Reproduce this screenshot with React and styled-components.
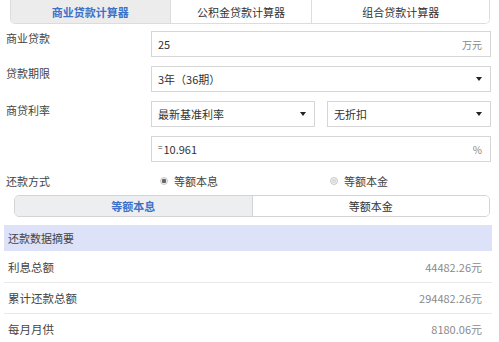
import React from 'react';
import styled, { createGlobalStyle } from 'styled-components';

const GlobalStyle = createGlobalStyle`
    body {
        margin: 0;
        background: #fff;
        font-family: 'Noto Sans CJK SC', 'Liberation Sans', sans-serif;
        color: #444;
    }
`

const Page = styled.div`
    width: 499px;
    height: 342px;
    overflow: hidden;
    font-size: 11px;
`

const Tabs = styled.div`
    display: flex;
    margin: 0 9px 0 10px;
    height: 24px;
    border: 1px solid #dcdcdc;
    border-top: none;
    border-radius: 0 0 5px 5px;
    box-sizing: border-box;
    overflow: hidden;
`

const Tab = styled.div`
    width: ${props => props.w}px;
    display: flex;
    align-items: center;
    justify-content: center;
    background: ${props => (props.active ? '#ececec' : '#fff')};
    color: ${props => (props.active ? '#3b71c9' : '#333')};
    font-weight: ${props => (props.active ? 'bold' : 'normal')};
    border-left: ${props => (props.first ? 'none' : '1px solid #dcdcdc')};
    font-size: 11px;
`

const Form = styled.div`
    display: flex;
    flex-direction: column;
    gap: 9px;
    padding: 7px 8px 0 6px;
`

const Row = styled.div`
    display: flex;
    align-items: flex-start;
`

const Label = styled.div`
    width: 145px;
    font-size: 11px;
    color: #444;
    line-height: 14px;
    padding-top: ${props => props.pt || 0}px;
    padding-left: ${props => props.pl || 0}px;
`

const Controls = styled.div`
    flex: 1;
    display: flex;
    gap: 12px;
`

const Box = styled.div`
    flex: 1;
    height: 26px;
    box-sizing: border-box;
    border: 1px solid #d6d6d6;
    display: flex;
    align-items: center;
    justify-content: space-between;
    padding: 0 8px 0 6px;
    font-size: 11px;
    color: #333;
`

const Unit = styled.span`
    color: #888;
    font-size: 10px;
`

const Arrow = styled.span`
    width: 0;
    height: 0;
    border-left: 3.5px solid transparent;
    border-right: 3.5px solid transparent;
    border-top: 4px solid #222;
`

const Eq = styled.span`
    font-size: 8px;
    margin-right: 1px;
    position: relative;
    top: -4px;
`

const RadioRow = styled.div`
    display: flex;
    align-items: center;
    margin-top: 11px;
`

const RadioOpt = styled.div`
    display: flex;
    align-items: center;
    gap: 6px;
    width: ${props => props.w}px;
    padding-left: ${props => props.pl || 0}px;
    color: #444;
`

const Dot = styled.span`
    width: 8px;
    height: 8px;
    border-radius: 50%;
    border: 1px solid #c8c8c8;
    background: ${props => (props.on ? 'radial-gradient(circle, #666 0 2px, #eee 2.5px)' : 'radial-gradient(circle, #ddd 0 2px, #f2f2f2 2.5px)')};
    box-sizing: border-box;
`

const Switch = styled.div`
    display: flex;
    margin: 6px 9px 0 14px;
    height: 22px;
    border: 1px solid #d4d4d4;
    border-radius: 5px;
    overflow: hidden;
    box-sizing: border-box;
`

const SwitchPart = styled.div`
    flex: 1;
    display: flex;
    align-items: center;
    justify-content: center;
    background: ${props => (props.active ? '#eceeef' : '#fff')};
    color: ${props => (props.active ? '#3b71c9' : '#333')};
    font-weight: ${props => (props.active ? 'bold' : 'normal')};
    border-left: ${props => (props.active ? 'none' : '1px solid #d4d4d4')};
`

const Summary = styled.div`
    margin: 8px 7px 0 4px;
`

const SummaryHead = styled.div`
    height: 26px;
    background: #dde2f8;
    display: flex;
    align-items: center;
    padding-left: 4px;
    color: #444;
`

const SummaryRow = styled.div`
    height: 31px;
    display: flex;
    align-items: center;
    justify-content: space-between;
    padding: 0 10px 0 4px;
    border-top: ${props => (props.first ? 'none' : '1px solid #e8e8e8')};
    box-sizing: border-box;
    font-size: 11.5px;
`

const Value = styled.span`
    color: #8a8a8a;
    font-size: 11px;
`

const App = () => {
    const results = [
        ['利息总额', '44482.26元'],
        ['累计还款总额', '294482.26元'],
        ['每月月供', '8180.06元'],
    ];

    return (
        <Page>
            <GlobalStyle />
            <Tabs>
                <Tab w={160} active first>商业贷款计算器</Tab>
                <Tab w={142}>公积金贷款计算器</Tab>
                <Tab w={178}>组合贷款计算器</Tab>
            </Tabs>

            <Form>
                <Row>
                    <Label>商业贷款</Label>
                    <Controls>
                        <Box>25<Unit>万元</Unit></Box>
                    </Controls>
                </Row>
                <Row>
                    <Label>贷款期限</Label>
                    <Controls>
                        <Box>3年（36期）<Arrow /></Box>
                    </Controls>
                </Row>
                <Row>
                    <Label pt={2}>商贷利率</Label>
                    <Controls>
                        <Box>最新基准利率<Arrow /></Box>
                        <Box>无折扣<Arrow /></Box>
                    </Controls>
                </Row>
                <Row>
                    <Label />
                    <Controls>
                        <Box><span><Eq>=</Eq>10.961</span><Unit>%</Unit></Box>
                    </Controls>
                </Row>
            </Form>

            <RadioRow>
                <Label pl={6}>还款方式</Label>
                <RadioOpt w={170} pl={9}><Dot on />等额本息</RadioOpt>
                <RadioOpt><Dot />等额本金</RadioOpt>
            </RadioRow>

            <Switch>
                <SwitchPart active>等额本息</SwitchPart>
                <SwitchPart>等额本金</SwitchPart>
            </Switch>

            <Summary>
                <SummaryHead>还款数据摘要</SummaryHead>
                {results.map(([k, v], i) => (
                    <SummaryRow key={k} first={i === 0}>
                        <span>{k}</span>
                        <Value>{v}</Value>
                    </SummaryRow>
                ))}
            </Summary>
        </Page>
    );
}

export default App;
